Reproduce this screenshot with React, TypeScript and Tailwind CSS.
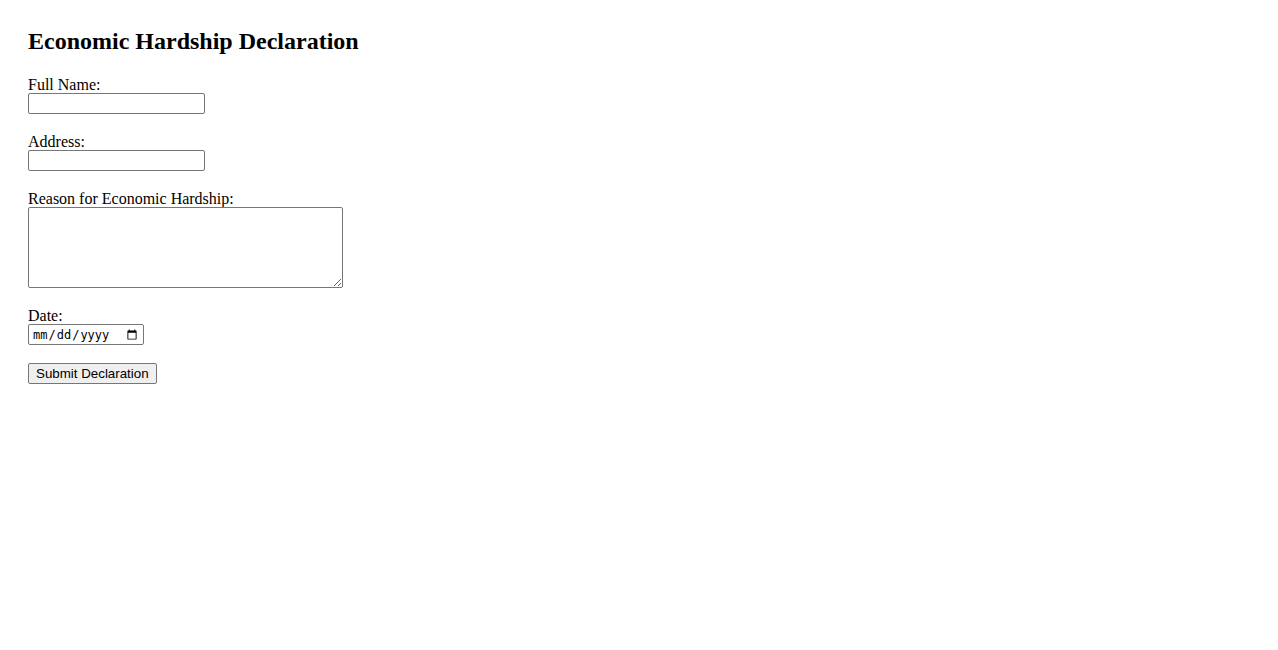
import React from "react";

export default function App() {
  const labelCls = "block h-[18px] text-[16px] leading-[20px]";
  return (
    <div className="min-h-[650px] w-full bg-white pl-[28px] pt-[27px] font-['Liberation_Serif',serif] text-black">
      <h2 className="m-0 text-[24px] font-bold leading-[28px]">Economic Hardship Declaration</h2>
      <form className="mt-[20px] flex flex-col items-start" onSubmit={(e) => e.preventDefault()}>
        <label htmlFor="name" className={labelCls}>Full Name:</label>
        <input
          id="name"
          type="text"
          className="block h-[21px] w-[177px] rounded-[2px] border border-[#767676] bg-white px-[2px] text-[13px]"
        />
        <label htmlFor="address" className={`mt-[18px] ${labelCls}`}>Address:</label>
        <input
          id="address"
          type="text"
          className="block h-[21px] w-[177px] rounded-[2px] border border-[#767676] bg-white px-[2px] text-[13px]"
        />
        <label htmlFor="reason" className={`mt-[18px] ${labelCls}`}>Reason for Economic Hardship:</label>
        <textarea
          id="reason"
          className="block h-[81px] w-[315px] resize rounded-[2px] border border-[#767676] bg-white p-[2px] font-['Liberation_Mono',monospace] text-[13px]"
        />
        <label htmlFor="date" className={`mt-[18px] ${labelCls}`}>Date:</label>
        <input
          id="date"
          type="date"
          className="block h-[21px] w-[116px] rounded-[2px] border border-[#767676] bg-white px-[3px] font-['DejaVu_Sans_Mono',monospace] text-[12px]"
        />
        <button
          type="submit"
          className="mt-[18px] block h-[21px] rounded-[2px] border border-[#767676] bg-[#efefef] px-[7px] font-['Liberation_Sans',Arial,sans-serif] text-[13.33px] leading-[15px]"
        >
          Submit Declaration
        </button>
      </form>
    </div>
  );
}
